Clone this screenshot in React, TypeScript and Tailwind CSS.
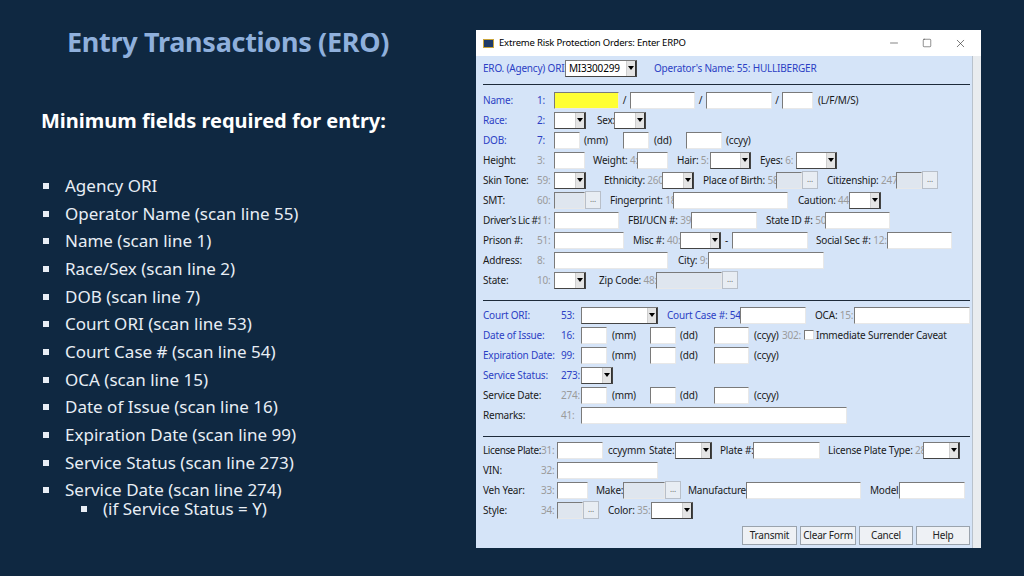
import React from "react";
import { Minus, Square, X } from "lucide-react";

const BLUE = "text-[#2c3fc4]";
const GRAY = "text-[#9b9b9b]";

const T = ({ c = "", children }: { c?: string; children?: React.ReactNode }) => (
  <span className={"shrink-0 whitespace-nowrap overflow-visible " + c}>{children}</span>
);

const G = ({ children }: { children: React.ReactNode }) => <span className={GRAY}>{children}</span>;

const In = ({ c = "", tone = "white" }: { c?: string; tone?: "white" | "yellow" | "gray" }) => (
  <span
    className={
      "shrink-0 h-[17px] border border-t-[#7a7a7a] border-l-[#7a7a7a] border-r-[#e8e8e8] border-b-[#e8e8e8] " +
      (tone === "yellow" ? "bg-[#ffff33] " : tone === "gray" ? "bg-[#dfe6ef] " : "bg-white ") +
      c
    }
  />
);

const Dd = ({ c = "", text = "" }: { c?: string; text?: string }) => (
  <span className={"shrink-0 h-[17px] flex border border-t-[#7a7a7a] border-l-[#7a7a7a] border-r-[#444] border-b-[#444] bg-white " + c}>
    <span className="flex-1 pl-[3px] leading-[15px] text-black">{text}</span>
    <span className="w-[10px] bg-[#e4e4e4] border-l border-[#cfcfcf] border-r border-r-[#333] flex items-center justify-center">
      <span className="w-0 h-0 border-l-[3px] border-r-[3px] border-t-[4px] border-l-transparent border-r-transparent border-t-black" />
    </span>
  </span>
);

const Dots = () => (
  <span className="shrink-0 w-[16px] h-[18px] bg-[#e8edf3] border border-[#b8bfc9] text-[8px] leading-[14px] text-center text-[#666]">...</span>
);

const Row = ({ children }: { children: React.ReactNode }) => (
  <div className="flex items-center h-5">{children}</div>
);

const Sep = ({ c = "" }: { c?: string }) => <div className={"h-px bg-[#1d2a3a] mr-[2px] " + c} />;

const Btn = ({ c = "", children }: { c?: string; children: React.ReactNode }) => (
  <span className={"h-[19px] flex items-center justify-center bg-[#eef1f5] border border-[#9aa3ad] text-[10px] text-[#222] " + c}>
    {children}
  </span>
);

const bullets = [
  "Agency ORI",
  "Operator Name (scan line 55)",
  "Name (scan line 1)",
  "Race/Sex (scan line 2)",
  "DOB (scan line 7)",
  "Court ORI (scan line 53)",
  "Court Case # (scan line 54)",
  "OCA (scan line 15)",
  "Date of Issue (scan line 16)",
  "Expiration Date (scan line 99)",
  "Service Status (scan line 273)",
  "Service Date (scan line 274)",
];

const DateFields = () => (
  <>
    <In c="w-[26px]" />
    <T c="w-[43px] pl-[5px]">(mm)</T>
    <In c="w-[26px]" />
    <T c="w-[38px] pl-[4px]">(dd)</T>
    <In c="w-[35px]" />
    <T c="w-[33px] pl-[5px]">(ccyy)</T>
  </>
);

export default function App() {
  return (
    <div className="w-[1024px] h-[576px] bg-[#0f2841] flex overflow-hidden">
      {/* Slide text */}
      <div className="w-[476px] shrink-0 font-['Lato']">
        <h1 className="pl-[67px] pt-[26px] text-[27px] leading-8 font-bold text-[#8fb0dc] tracking-[-0.3px]">
          Entry Transactions (ERO)
        </h1>
        <h2 className="pl-[41px] mt-[51px] text-[20px] leading-6 font-bold text-white">
          Minimum fields required for entry:
        </h2>
        <ul className="pl-[43px] mt-[39px] text-[17px] leading-6 text-[#e8eef5]">
          {bullets.map((b) => (
            <li key={b} className="flex items-center h-[27.7px]">
              <span className="w-[6px] h-[6px] bg-[#e8eef5] mr-[16px]" />
              {b}
            </li>
          ))}
          <li className="flex items-center h-[20px] pl-[38px] -mt-[5px]">
            <span className="w-[6px] h-[6px] bg-[#e8eef5] mr-[16px]" />
            (if Service Status = Y)
          </li>
        </ul>
      </div>

      {/* Dialog window */}
      <div className="mt-[30px] w-[505px] h-[518px] shrink-0 flex flex-col bg-[#f3f3f3] font-['Liberation_Sans'] text-[10px] text-[#1a1a1a] tracking-[-0.2px]">
        <div className="h-[26px] flex items-center pl-[7px] bg-white">
          <span className="w-[11px] h-[9px] bg-[#1e3a6a] border border-[#c9a43a] mr-[5px]" />
          <span className="text-[9.5px] text-black">Extreme Risk Protection Orders: Enter ERPO</span>
          <div className="ml-auto flex items-center gap-[22px] pr-[14px] text-[#333]">
            <Minus size={12} strokeWidth={1.2} />
            <Square size={10} strokeWidth={1.3} />
            <X size={13} strokeWidth={1.2} />
          </div>
        </div>
        <div className="flex flex-1">
          <div className="w-[496px] bg-[#d5e4f8] pl-[7px] pt-[2px]">
            <Row>
              <T c={"w-[82px] " + BLUE}>ERO. (Agency) ORI:</T>
              <Dd c="w-[72px]" text="MI3300299" />
              <T c={"pl-[17px] " + BLUE}>Operator's Name: 55: HULLIBERGER</T>
            </Row>
            <Sep c="mt-[6px] mb-[5px]" />
            <Row>
              <T c={"w-[54px] " + BLUE}>Name:</T>
              <T c={"w-[17px] " + BLUE}>1:</T>
              <In c="w-[65px]" tone="yellow" />
              <T c="w-[11px] text-center">/</T>
              <In c="w-[65px]" />
              <T c="w-[11px] text-center">/</T>
              <In c="w-[66px]" />
              <T c="w-[10px] text-center">/</T>
              <In c="w-[31px]" />
              <T c="pl-[5px]">(L/F/M/S)</T>
            </Row>
            <Row>
              <T c={"w-[54px] " + BLUE}>Race:</T>
              <T c={"w-[17px] " + BLUE}>2:</T>
              <Dd c="w-[32px]" />
              <T c="w-[28px] pl-[11px]">Sex:</T>
              <Dd c="w-[32px]" />
            </Row>
            <Row>
              <T c={"w-[54px] " + BLUE}>DOB:</T>
              <T c={"w-[17px] " + BLUE}>7:</T>
              <In c="w-[26px]" />
              <T c="w-[43px] pl-[4px]">(mm)</T>
              <In c="w-[26px]" />
              <T c="w-[37px] pl-[5px]">(dd)</T>
              <In c="w-[36px]" />
              <T c="pl-[4px]">(ccyy)</T>
            </Row>
            <Row>
              <T c="w-[54px]">Height:</T>
              <T c={"w-[17px] " + GRAY}>3:</T>
              <In c="w-[31px]" />
              <T c="w-[52px] pl-[8px]">Weight: <G>4:</G></T>
              <In c="w-[31px]" />
              <T c="w-[42px] pl-[9px]">Hair: <G>5:</G></T>
              <Dd c="w-[41px]" />
              <T c="w-[45px] pl-[9px]">Eyes: <G>6:</G></T>
              <Dd c="w-[41px]" />
            </Row>
            <Row>
              <T c="w-[54px]">Skin Tone:</T>
              <T c={"w-[17px] " + GRAY}>59:</T>
              <Dd c="w-[32px]" />
              <T c="w-[76px] pl-[18px]">Ethnicity: <G>260:</G></T>
              <Dd c="w-[32px]" />
              <T c="w-[82px] pl-[9px]">Place of Birth: <G>58:</G></T>
              <In c="w-[26px]" tone="gray" />
              <Dots />
              <T c="w-[78px] pl-[9px]">Citizenship: <G>247:</G></T>
              <In c="w-[26px]" tone="gray" />
              <Dots />
            </Row>
            <Row>
              <T c="w-[54px]">SMT:</T>
              <T c={"w-[17px] " + GRAY}>60:</T>
              <In c="w-[31px]" tone="gray" />
              <Dots />
              <T c="w-[72px] pl-[9px]">Fingerprint: <G>18:</G></T>
              <In c="w-[115px]" />
              <T c="w-[61px] pl-[10px]">Caution: <G>44:</G></T>
              <Dd c="w-[32px]" />
            </Row>
            <Row>
              <T c="w-[54px] tracking-[-0.4px]">Driver's Lic #:</T>
              <T c={"w-[17px] " + GRAY}>11:</T>
              <In c="w-[65px]" />
              <T c="w-[72px] pl-[9px]">FBI/UCN #: <G>39:</G></T>
              <In c="w-[66px]" />
              <T c="w-[68px] pl-[9px]">State ID #: <G>50:</G></T>
              <In c="w-[65px]" />
            </Row>
            <Row>
              <T c="w-[54px]">Prison #:</T>
              <T c={"w-[17px] " + GRAY}>51:</T>
              <In c="w-[70px]" />
              <T c="w-[56px] pl-[9px]">Misc #: <G>40:</G></T>
              <Dd c="w-[41px]" />
              <T c="w-[11px] pl-[4px]">-</T>
              <In c="w-[76px]" />
              <T c="w-[79px] pl-[8px]">Social Sec #: <G>12:</G></T>
              <In c="w-[65px]" />
            </Row>
            <Row>
              <T c="w-[54px]">Address:</T>
              <T c={"w-[17px] " + GRAY}>8:</T>
              <In c="w-[114px]" />
              <T c="w-[40px] pl-[10px]">City: <G>9:</G></T>
              <In c="w-[116px]" />
            </Row>
            <Row>
              <T c="w-[54px]">State:</T>
              <T c={"w-[17px] " + GRAY}>10:</T>
              <Dd c="w-[32px]" />
              <T c="w-[70px] pl-[13px]">Zip Code: <G>48:</G></T>
              <In c="w-[66px]" tone="gray" />
              <Dots />
            </Row>
            <Sep c="mt-[10px] mb-[4px]" />
            <Row>
              <T c={"w-[78px] " + BLUE}>Court ORI:</T>
              <T c={"w-[20px] " + BLUE}>53:</T>
              <Dd c="w-[77px]" />
              <T c={"w-[82px] pl-[9px] " + BLUE}>Court Case #: 54:</T>
              <In c="w-[66px]" />
              <T c="w-[48px] pl-[9px]">OCA: <G>15:</G></T>
              <In c="w-[116px]" />
            </Row>
            <Row>
              <T c={"w-[78px] " + BLUE}>Date of Issue:</T>
              <T c={"w-[20px] " + BLUE}>16:</T>
              <DateFields />
              <T c={"w-[22px] " + GRAY}>302:</T>
              <span className="shrink-0 w-[10px] h-[10px] bg-white border border-t-[#7a7a7a] border-l-[#7a7a7a] border-r-[#ddd] border-b-[#ddd]" />
              <T c="pl-[2px]">Immediate Surrender Caveat</T>
            </Row>
            <Row>
              <T c={"w-[78px] " + BLUE}>Expiration Date:</T>
              <T c={"w-[20px] " + BLUE}>99:</T>
              <DateFields />
            </Row>
            <Row>
              <T c={"w-[78px] " + BLUE}>Service Status:</T>
              <T c={"w-[20px] " + BLUE}>273:</T>
              <Dd c="w-[32px]" />
            </Row>
            <Row>
              <T c="w-[78px]">Service Date:</T>
              <T c={"w-[20px] " + GRAY}>274:</T>
              <DateFields />
            </Row>
            <Row>
              <T c="w-[78px]">Remarks:</T>
              <T c={"w-[20px] " + GRAY}>41:</T>
              <In c="w-[266px]" />
            </Row>
            <Sep c="mt-[11px] mb-[3px]" />
            <Row>
              <T c="w-[58px] tracking-[-0.4px]">License Plate:</T>
              <T c={"w-[16px] " + GRAY}>31:</T>
              <In c="w-[46px]" />
              <T c="w-[46px] pl-[5px]">ccyymm</T>
              <T c="w-[26px]">State:</T>
              <Dd c="w-[37px]" />
              <T c="w-[41px] pl-[8px]">Plate #:</T>
              <In c="w-[67px]" />
              <T c="w-[103px] pl-[8px]">License Plate Type: <G>28:</G></T>
              <Dd c="w-[37px]" />
            </Row>
            <Row>
              <T c="w-[58px]">VIN:</T>
              <T c={"w-[16px] " + GRAY}>32:</T>
              <In c="w-[101px]" />
            </Row>
            <Row>
              <T c="w-[58px]">Veh Year:</T>
              <T c={"w-[16px] " + GRAY}>33:</T>
              <In c="w-[31px]" />
              <T c="w-[35px] pl-[8px]">Make:</T>
              <In c="w-[42px]" tone="gray" />
              <Dots />
              <T c="w-[65px] pl-[7px]">Manufacturer:</T>
              <In c="w-[115px]" />
              <T c="w-[38px] pl-[9px]">Model:</T>
              <In c="w-[66px]" />
            </Row>
            <Row>
              <T c="w-[58px]">Style:</T>
              <T c={"w-[16px] " + GRAY}>34:</T>
              <In c="w-[26px]" tone="gray" />
              <Dots />
              <T c="w-[52px] pl-[9px]">Color: <G>35:</G></T>
              <Dd c="w-[42px]" />
            </Row>
            <div className="flex justify-end gap-[3px] pr-[2px] mt-[6px]">
              <Btn c="w-[55px]">Transmit</Btn>
              <Btn c="w-[56px]">Clear Form</Btn>
              <Btn c="w-[54px]">Cancel</Btn>
              <Btn c="w-[54px]">Help</Btn>
            </div>
          </div>
          <div className="flex-1 bg-[#e9ecef] border-l border-[#b9c2cc]" />
        </div>
      </div>
    </div>
  );
}
